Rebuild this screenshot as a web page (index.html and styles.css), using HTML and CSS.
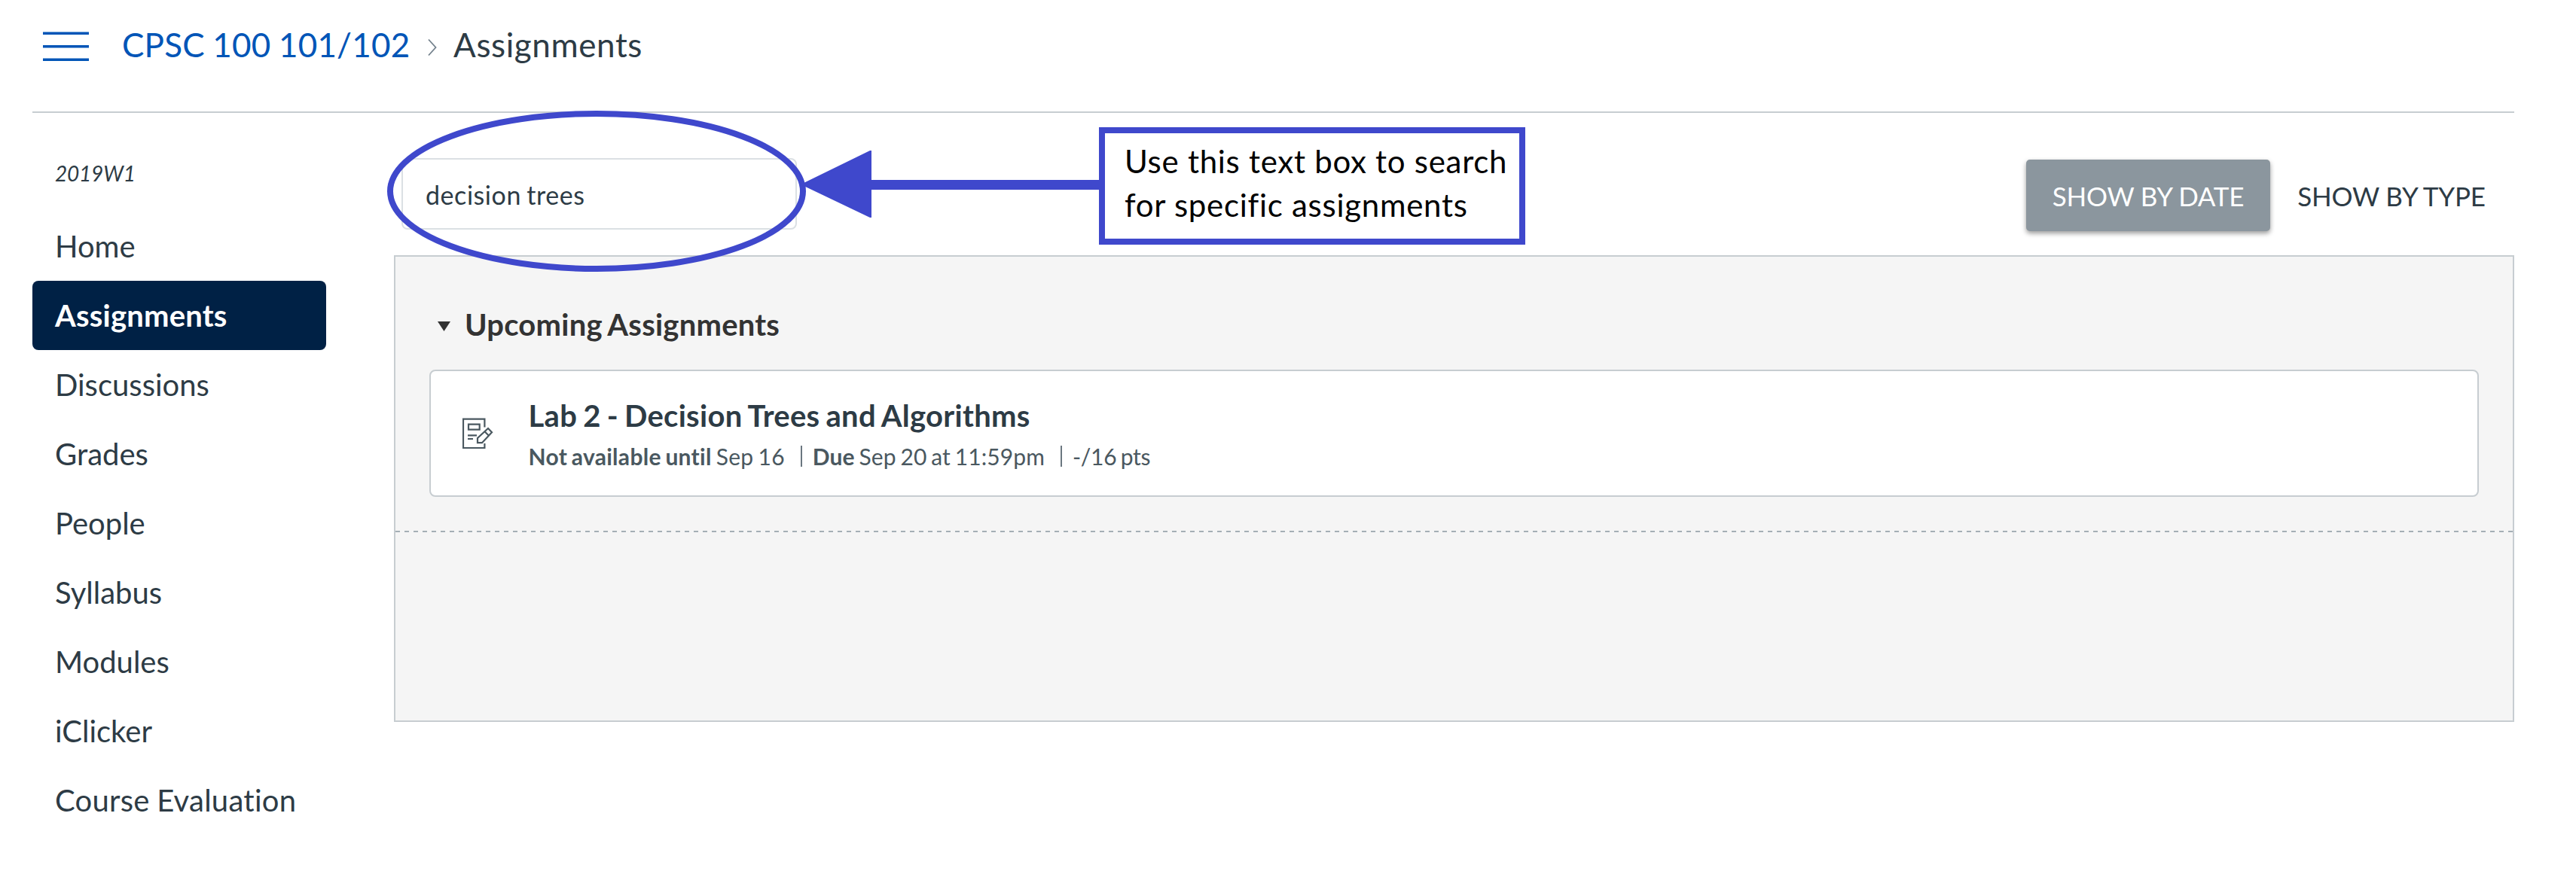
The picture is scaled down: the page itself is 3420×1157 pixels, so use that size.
FILE: index.html
```html
<!DOCTYPE html>
<html lang="en">
<head>
<meta charset="utf-8">
<title>Assignments</title>
<link rel="stylesheet" href="styles.css">
</head>
<body>
<div class="page">
  <header class="topbar">
    <svg class="menu" width="61" height="40" viewBox="0 0 61 40"><path d="M0 3.300h61M0 20.800h61M0 38.300h61" stroke="#0055b7" stroke-width="3.4"/></svg>
    <nav class="crumbs">
      <a class="crumb-link">CPSC 100 101/102</a>
      <svg class="chevron" width="12" height="24" viewBox="0 0 12 24"><path d="M1 1.500L10.500 12L1 22.500" fill="none" stroke="#73818c" stroke-width="1.8"/></svg>
      <span class="crumb-current">Assignments</span>
    </nav>
  </header>
  <div class="body">
    <aside class="side">
      <div class="term">2019W1</div>
      <ul class="nav">
        <li>Home</li>
        <li class="active">Assignments</li>
        <li>Discussions</li>
        <li>Grades</li>
        <li>People</li>
        <li>Syllabus</li>
        <li>Modules</li>
        <li>iClicker</li>
        <li class="wide">Course Evaluation</li>
      </ul>
    </aside>
    <main class="main">
      <div class="tools">
        <div class="search">decision trees</div>
        <div class="toggle">
          <div class="btn on">SHOW BY DATE</div>
          <div class="btn">SHOW BY TYPE</div>
        </div>
      </div>
      <section class="panel">
        <div class="group">
          <h2 class="group-head">
            <svg class="caret" width="17" height="13" viewBox="0 0 17 13"><path d="M0 0h17L8.500 13z" fill="#333"/></svg>
            <span>Upcoming Assignments</span>
          </h2>
          <article class="card">
            <svg class="icon" width="42" height="42" viewBox="0 0 42 42" fill="none" stroke="#4a5860" stroke-width="2.2"><path d="M29.400 12.500V1.700H1v38.300h28.400V34"/><path d="M8 8.700h14.700v7H8zM7 23.400h12M7 28h7"/><path d="M20 33.200V27L34 14l5 5.200L26 33.200zM29.500 18.200l5.300 5.300"/></svg>
            <div class="info">
              <div class="title">Lab 2 - Decision Trees and Algorithms</div>
              <div class="meta">
                <span class="avail"><b>Not available until</b> Sep 16</span>
                <span class="item due"><b>Due</b> Sep 20 at 11:59pm</span>
                <span class="item points">-/16 pts</span>
              </div>
            </div>
          </article>
        </div>
      </section>
    </main>
  </div>
  <svg class="mark" width="970" height="220" viewBox="510 145 970 220"><ellipse cx="792" cy="254" rx="274" ry="103" fill="none" stroke="#3f48cc" stroke-width="8"/><path d="M1063 245L1155 200h2v39h304v13h-304v37h-2z" fill="#3f48cc"/></svg>
  <div class="note">Use this text box to search<br>for specific assignments</div>
</div>
</body>
</html>
```
FILE: styles.css
```css
* { box-sizing: border-box; }
body { margin: 0; background: #fff; color: #2d3b45; font-family: Lato, sans-serif; font-variant-ligatures: none; }
.page { position: relative; width: 3420px; height: 1157px; overflow: hidden; padding: 0 82px 0 43px; }
.topbar { display: flex; align-items: center; height: 150px; padding: 0 0 26px 14px; border-bottom: 2px solid #c7cdd1; }
.menu { margin-right: 44px; }
.crumbs { display: flex; align-items: center; font-size: 44px; line-height: 52px; margin-top: -4px; }
.crumb-link { width: 382px; color: #0055b7; letter-spacing: 0.2px; word-spacing: -1px; white-space: nowrap; }
.crumb-current { letter-spacing: 0.6px; }
.chevron { margin: 8px 22px 0 24px; }
.body { display: flex; }
.side { width: 480px; padding-top: 60px; }
.term { padding-left: 30px; font-size: 28px; line-height: 40px; font-style: italic; letter-spacing: -0.2px; }
.nav { list-style: none; width: 390px; margin: 31px 0 0; padding: 0; font-size: 40px; line-height: 92px; }
.nav li { padding-left: 30px; }
.nav .active { background: #002145; color: #fff; font-weight: 700; letter-spacing: 0.2px; border-radius: 8px; }
.nav .wide { letter-spacing: 0.25px; word-spacing: -1px; }
.main { flex: 1; }
.tools { display: flex; justify-content: space-between; height: 189px; padding: 60px 0 0 10px; }
.search { width: 525px; height: 95px; padding: 1px 0 0 30px; border: 2px solid #dbe0e4; border-radius: 8px; font-size: 34px; line-height: 91px; letter-spacing: 0.55px; word-spacing: -2px; }
.toggle { display: flex; padding-top: 2px; }
.btn { width: 324px; height: 95px; padding: 1px 2px 0 0; text-align: center; font-size: 35px; line-height: 94px; letter-spacing: -0.2px; border-radius: 5px; }
.btn.on { padding-right: 0; letter-spacing: -0.25px; background: #8b969e; color: #fff; box-shadow: 0 3px 6px rgba(0,0,0,.4); }
.panel { height: 620px; background: #f5f5f5; border: 2px solid #c7cdd1; }
.group { height: 366px; padding: 65px 45px 0; background: repeating-linear-gradient(90deg, #a5afb5 0 6px, transparent 6px 11.987px) left bottom / 100% 2px no-repeat; }
.group-head { display: flex; align-items: center; gap: 19px; margin: 0; padding-left: 11px; height: 50px; color: #333; font-size: 40px; line-height: 50px; letter-spacing: 0.22px; word-spacing: -2px; }
.caret { margin-top: 5px; }
.card { display: flex; height: 169px; margin-top: 35px; padding: 35px 0 0 42px; background: #fff; border: 2px solid #c7cdd1; border-radius: 8px; }
.icon { margin: 27px 45.5px 0 0; }
.title { font-size: 40px; line-height: 48px; font-weight: 700; letter-spacing: 0.3px; word-spacing: -2px; }
.meta { display: flex; margin-top: 10px; color: #4a5860; font-size: 30px; line-height: 40px; word-spacing: -2px; }
.avail { letter-spacing: 0.3px; }
.due { letter-spacing: 0.1px; }
.points { letter-spacing: -0.3px; }
.item { position: relative; margin-left: 37px; }
.item::before { content: ""; position: absolute; left: -16px; top: 6px; width: 2px; height: 28px; background: #6b7780; }
.mark { position: absolute; left: 510px; top: 145px; }
.note { position: absolute; left: 1459px; top: 169px; width: 566px; height: 156px; padding: 8px 0 0 26px; border: 8px solid #3f48cc; background: #fff; color: #000; font-size: 42px; line-height: 58px; letter-spacing: 0.72px; white-space: nowrap; }
```
